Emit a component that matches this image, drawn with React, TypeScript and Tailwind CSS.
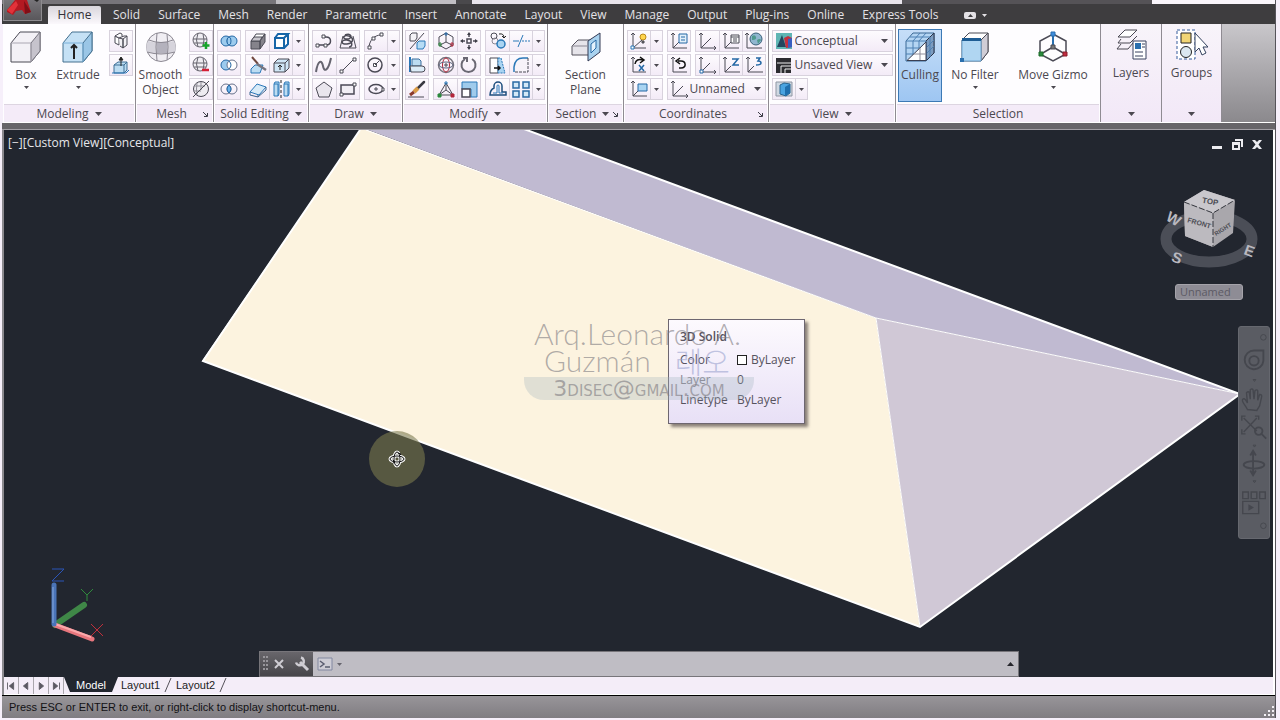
import type { ReactNode } from "react";
import clsx from "clsx";

const tabs = [
  "Solid",
  "Surface",
  "Mesh",
  "Render",
  "Parametric",
  "Insert",
  "Annotate",
  "Layout",
  "View",
  "Manage",
  "Output",
  "Plug-ins",
  "Online",
  "Express Tools",
];

// all small icons are drawn on a 24x22 grid, the button border takes the outer pixel
const icons: Record<string, ReactNode> = {
  polysolid: (
    <>
      <path d="M6 6l5-3 2 1v3M6 6v7l4 2V8z" fill="#fff" />
      <path d="M10 8l4 1v9l-3-2M14 9l4-3v9l-4 3zM6 6l4 2 5-2 3 0" fill="#f2f0f5" />
    </>
  ),
  presspull: (
    <>
      <path d="M5 11l4-3h9v8l-3 3H5z" fill="#bcdcf2" stroke="#3f6f96" />
      <path d="M5 11h10v8M15 11l3-3" stroke="#3f6f96" />
      <path d="M3 19h14l3-3" stroke="#2a78b8" />
      <path d="M12 12V4M10 6l2-3 2 3z" stroke="#222" fill="#222" />
    </>
  ),
  meshMore: (
    <>
      <circle cx="11" cy="10" r="7" fill="#efedf2" stroke="#66646e" />
      <path d="M4 9h14M5 13h12M9 3q-3 7 0 14M14 4q2 6 0 12" stroke="#66646e" />
      <path d="M17 12v7M13.500 15.500h7" stroke="#18a32a" strokeWidth="2.500" />
    </>
  ),
  meshLess: (
    <>
      <circle cx="11" cy="10" r="7" fill="#efedf2" stroke="#66646e" />
      <path d="M4 9h14M5 13h12M9 3q-3 7 0 14M14 4q2 6 0 12" stroke="#66646e" />
      <path d="M13 16h7" stroke="#d41f35" strokeWidth="2.500" />
    </>
  ),
  meshOff: (
    <>
      <circle cx="12" cy="11" r="7.500" fill="#eeecf1" />
      <path d="M8 5q-1 6 0 12M5 8h11M5 13h7M12 4v8" stroke="#8f8d96" />
      <path d="M4 19L20 3" />
    </>
  ),
  union: (
    <g stroke="#2468a5" fill="#9ccbee">
      <circle cx="9" cy="11" r="5" />
      <circle cx="15" cy="11" r="5" />
      <ellipse cx="12" cy="11" rx="2" ry="4" />
    </g>
  ),
  subtract: (
    <>
      <circle cx="9" cy="11" r="5" fill="#9ccbee" stroke="#2468a5" />
      <circle cx="15" cy="11" r="5" fill="#fff" stroke="#67718a" />
      <path d="M12 7q4 4 0 8" stroke="#2468a5" />
    </>
  ),
  intersect: (
    <>
      <circle cx="9" cy="11" r="5" stroke="#67718a" />
      <circle cx="15" cy="11" r="5" stroke="#67718a" />
      <path d="M12 7q4 4 0 8q-4-4 0-8z" fill="#69b2ea" stroke="#2468a5" />
    </>
  ),
  thicken: (
    <>
      <path d="M10 4h9l-5 6H6z" fill="#fff" />
      <path d="M5 11h9v8H5zM14 11l5-7v8l-5 7z" fill="#85838b" />
      <path d="M8 7h8l-2 4H5z" fill="#c9c7ce" />
    </>
  ),
  slice: (
    <>
      <path d="M5 15l4-4h8l-3 8H5z" fill="#bcdcf2" stroke="#2a78b8" />
      <path d="M6 3l6 7" stroke="#70483f" strokeWidth="2" />
      <path d="M11 10l9 6" strokeWidth="2.500" stroke="#77757f" />
    </>
  ),
  slab: (
    <>
      <path d="M4 14l7-8 9 3-7 8z" fill="#d8ebf8" stroke="#2a78b8" />
      <path d="M4 14v3l8 2 8-7V9M12 17v2" stroke="#39648c" />
    </>
  ),
  frameBox: (
    <g stroke="#1665a8" strokeWidth="2">
      <path d="M6 8h9v10H6zM6 8l3-4h10l-4 4M19 4v10l-4 4" fill="#fff" />
    </g>
  ),
  shellBox: (
    <>
      <path d="M5 9l4-4h11v9l-4 4H5z" fill="#cfe6f6" />
      <path d="M5 9h11v9M16 9l4-4" />
      <path d="M11 16v-4M9 13l2-2 2 2" stroke="#222" />
    </>
  ),
  separate: (
    <>
      <path d="M5 6h4v12H5zM5 6l1-2h4v12l-1 2" fill="#bcdcf2" stroke="#2a78b8" />
      <path d="M15 6h4v12h-4zM15 6l1-2h4v12l-1 2" fill="#bcdcf2" stroke="#2a78b8" />
      <path d="M12 2v18" stroke="#222" strokeDasharray="3 2" />
    </>
  ),
  polyline: (
    <>
      <path d="M6 15h8c6 0 6-8 0-8h-2" strokeWidth="1.500" />
      <path d="M4 14h3v3H4zM12 14h3v3h-3zM10 5h3v3h-3z" fill="#fff" />
    </>
  ),
  helix: (
    <>
      <path d="M7 6L4 18h16L17 6" />
      <path d="M9 5c7-3 8 4 2 4s-3-5 2-3 5 7-2 8-6-5 0-4 6 7 2 7" strokeWidth="1.500" />
    </>
  ),
  arc: (
    <>
      <path d="M5 18c0-7 5-13 12-13" />
      <path d="M4 16h3v3H4zM8 7h3v3H8zM16 3h3v3h-3z" fill="#fff" />
    </>
  ),
  spline: <path d="M4 18c2-13 6-12 7-6s5 6 8-8" strokeWidth="2" stroke="#666570" />,
  line: (
    <>
      <path d="M5 18L18 5" />
      <path d="M4 16h3v3H4zM17 4h3v3h-3z" fill="#fff" />
    </>
  ),
  circle: (
    <>
      <circle cx="11" cy="11" r="7" strokeWidth="1.500" />
      <path d="M11 11l4-4M9.500 9.500h3v3h-3z" fill="#fff" />
    </>
  ),
  polygon: <path d="M12 4l8 6-3 9H7l-3-9z" fill="#e9e6ed" />,
  rectangle: (
    <>
      <path d="M5 7h13v9H5z" fill="#f1eef4" strokeWidth="1.500" />
      <path d="M4 15h3v3H4zM17 5h3v3h-3z" fill="#fff" />
    </>
  ),
  ellipse: (
    <>
      <ellipse cx="12" cy="11" rx="7" ry="4.500" strokeWidth="1.500" />
      <path d="M10 11h4M12 9v4M18 10h2v3h-2z" fill="#fff" />
    </>
  ),
  move2: (
    <>
      <path d="M5 5l2-2h5v5l-2 3H5z" fill="#f4f2f6" />
      <path d="M5 19L19 3" />
      <path d="M12 13l2-2h6v5l-2 3h-6z" fill="#b7dcf5" stroke="#2a78b8" />
    </>
  ),
  gizmoMove: (
    <>
      <path d="M12 3l7 4v8l-7 4-7-4V7zM12 3v9l-6 3M12 12l6 3" />
      <path d="M5 13h2v3H5z" stroke="#2b8a3c" />
      <path d="M17 13h2v3h-2z" stroke="#b3273a" />
      <path d="M11 3h2v2h-2z" stroke="#2a6fae" />
    </>
  ),
  move: (
    <>
      <path d="M10 9h4v4h-4zM12 5v2M12 15v2M6 11h2M16 11h2" strokeWidth="1.500" />
      <path d="M10 5l2-3 2 3zM10 17l2 3 2-3zM6 9l-3 2 3 2zM18 9l3 2-3 2z" fill="#3c3c46" stroke="none" />
    </>
  ),
  copy: (
    <>
      <circle cx="8" cy="6" r="3" />
      <circle cx="9" cy="11" r="3" stroke="#8b8993" />
      <circle cx="15" cy="14" r="4" fill="#a9d4f2" stroke="#2a78b8" strokeWidth="1.500" />
      <path d="M13 4q5-1 5 4M16 6l2 2 2-2" stroke="#222" />
    </>
  ),
  trim: (
    <>
      <path d="M4 11h6M9 17L14 5" stroke="#2a78b8" />
      <path d="M13 11h8" stroke="#2a78b8" strokeDasharray="2 1" />
    </>
  ),
  align: (
    <>
      <path d="M5 3v15" stroke="#2a78b8" strokeWidth="2" />
      <path d="M7 5h7l2 2v5H7z" fill="#bcdcf2" stroke="#3a6f9e" />
      <path d="M5 12h12q3 0 3 3t-3 3H6z" fill="#dcecf8" />
    </>
  ),
  gizmoRotate: (
    <g>
      <circle cx="12" cy="11" r="7.500" stroke="#77757f" strokeWidth="1.500" />
      <ellipse cx="12" cy="11" rx="3.500" ry="7" stroke="#b3273a" />
      <ellipse cx="12" cy="11" rx="7" ry="3" stroke="#59617a" />
      <path d="M11 10h2v2h-2z" />
    </g>
  ),
  rotate: (
    <path d="M15 5a7 7 0 1 1-7 0M6 4h4v4" strokeWidth="2" stroke="#6a6873" />
  ),
  stretch: (
    <>
      <path d="M4 4h8v15H4z" fill="#fff" />
      <path d="M12 4h3l4 15h-7z" fill="#a9d4f2" stroke="#2a78b8" strokeDasharray="2 1" />
      <path d="M8 14h6M12 12l2 2-2 2" stroke="#111" strokeWidth="1.500" />
    </>
  ),
  fillet: (
    <>
      <path d="M5 18V11q1-7 8-7h6v14z" fill="#f7f3f9" stroke="none" />
      <path d="M5 18v-5q1-9 9-9h5" stroke="#2a78b8" strokeWidth="1.500" />
      <path d="M19 4v14H5" strokeDasharray="3 1" />
    </>
  ),
  erase: (
    <>
      <path d="M19 4l-6 6" stroke="#3a3a42" strokeWidth="2.500" strokeLinecap="round" />
      <path d="M13 10l-4 4" stroke="#d99b46" strokeWidth="4" />
      <path d="M9 14l-4 3" stroke="#8b3a2a" strokeWidth="3" />
      <path d="M3 19h16" />
    </>
  ),
  gizmoScale: (
    <>
      <path d="M12 5L5 17h14zM12 5v7L5 17M12 12l7 5" />
      <path d="M11 4h2v2h-2z" stroke="#2a78b8" />
      <path d="M4 16h3v3H4z" fill="#2b8a3c" stroke="#2b8a3c" />
      <path d="M17 16h3v3h-3z" fill="#b3273a" stroke="#b3273a" />
    </>
  ),
  scale: (
    <>
      <path d="M5 4h15v15h-6V11H5z" fill="#9fcbec" stroke="#2a78b8" />
      <path d="M5 11h8v8H5z" fill="#fff" strokeWidth="1.500" />
    </>
  ),
  offset: (
    <g>
      <path d="M4 17h16v-3h-4V8a4 4 0 0 0-8 0v2q-4 2-4 7z" stroke="#1d4e7d" strokeWidth="1.500" />
      <path d="M7 15h4V8a1 1 0 0 1 2 0v7h4" stroke="#2a78b8" />
    </g>
  ),
  array: (
    <g stroke="#2a6aa4" fill="#d3e8f7" strokeWidth="1.500">
      <path d="M4 4h6v6H4zM14 4h6v6h-6zM4 13h6v6H4zM14 13h6v6h-6z" />
    </g>
  ),
  ucs: <path d="M6 3v15h15M4 5l2-2 2 2M19 16l2 2-2 2M6 18l10-10" />,
  ucsBulb: (
    <>
      <path d="M6 3v15h13M4 5l2-2 2 2M6 18l9-8" />
      <circle cx="16" cy="7" r="3" fill="#ffd54d" stroke="#b98a1c" />
      <path d="M15 11h2v2h-2z" fill="#777" />
      <path d="M4 16h3v3H4z" fill="#fff" stroke="#2a78b8" />
    </>
  ),
  ucsX: (
    <>
      <path d="M6 3v15h13M4 5l2-2 2 2" />
      <path d="M8 10q1-6 8-4M13 3l4 3-4 3" stroke="#111" strokeWidth="1.500" />
      <path d="M12 11l5 6M17 11l-5 6" stroke="#2468a5" strokeWidth="1.500" />
    </>
  ),
  ucsView: (
    <>
      <path d="M6 3v15h14M4 5l2-2 2 2M6 18l6-6" />
      <path d="M11 6h9v7h-9z" fill="#a9d4f2" stroke="#2468a5" />
    </>
  ),
  ucsFile: (
    <>
      <path d="M6 3v15h14M4 5l2-2 2 2M6 18l7-7" />
      <path d="M12 4h8v9h-8z" fill="#e3f0fa" stroke="#2468a5" />
      <path d="M14 7h4M14 10h4" stroke="#2468a5" />
    </>
  ),
  ucsList: (
    <>
      <path d="M6 3v15h14M4 5l2-2 2 2M6 18l7-7" />
      <path d="M12 5h8v8h-8zM12 7h8M14 9h4M14 11h4" fill="#fff" />
    </>
  ),
  ucsWorld: (
    <>
      <path d="M5 3v15h15M3 5l2-2 2 2" />
      <circle cx="14" cy="9" r="6" fill="#8fb6cf" stroke="#3a6179" />
      <path d="M10 6q3-2 4 1t-4 3zM15 10q3-2 4 0l-3 4z" fill="#4e9a8d" stroke="none" />
    </>
  ),
  ucsPrev: (
    <>
      <path d="M6 3v15h14M4 5l2-2 2 2" />
      <path d="M12 14h2c6 0 5-7 0-7h-3M13 4l-4 3 4 3" stroke="#111" strokeWidth="1.500" />
    </>
  ),
  ucsOrigin: (
    <>
      <path d="M6 3v15h15M4 5l2-2 2 2M6 18l9-9M19 16l2 2-2 2" />
      <path d="M5 16h3v3H5z" fill="#fff" stroke="#2468a5" />
    </>
  ),
  ucsZ: (
    <>
      <path d="M6 3v15h15M4 5l2-2 2 2M6 18l6-6" />
      <path d="M13 5h6l-5 6h6" stroke="#2468a5" strokeWidth="1.500" />
    </>
  ),
  ucs3: (
    <>
      <path d="M6 3v15h15M4 5l2-2 2 2M6 18l6-6" />
      <path d="M14 4h4l-2 3q3 0 3 2t-5 2" stroke="#2468a5" strokeWidth="1.500" />
    </>
  ),
  conceptual: (
    <>
      <path d="M4 3h16v16H4z" fill="#5fb5b4" stroke="none" />
      <path d="M5 17L10 5l4 12z" fill="#23465f" stroke="none" />
      <path d="M12 8l4-2 4 2v9l-6 1z" fill="#c42f3e" stroke="none" />
      <path d="M16 9l4-1v9l-4 1z" fill="#375ec0" stroke="none" />
    </>
  ),
  unsavedView: (
    <>
      <path d="M4 4h15v15H4z" fill="#2b2b30" stroke="none" />
      <path d="M5 9h14M9 19v-7h10M13 19v-4h6" stroke="#eee" />
    </>
  ),
  viewport: (
    <>
      <path d="M4 4h16v14H4z" fill="#cfd8e2" stroke="#9097a3" />
      <path d="M8 7l4-2 6 1v9l-4 3-6-2z" fill="#4aa3e0" stroke="#28648f" />
      <path d="M13 9l5-3v9l-5 3z" fill="#1f6fae" stroke="none" />
    </>
  ),
};

function Icon({ name }: { name: string }) {
  return (
    <svg
      viewBox="1 1 22 20"
      className="h-5 w-[22px] shrink-0"
      fill="none"
      stroke="#4b4a55"
      aria-hidden="true"
    >
      {icons[name]}
    </svg>
  );
}

function Caret({ small, up }: { small?: boolean; up?: boolean }) {
  return (
    <svg
      viewBox="0 0 8 4"
      className={clsx("shrink-0", small ? "h-[3px] w-[5px]" : "h-1 w-[7px]", up && "rotate-180")}
      preserveAspectRatio="none"
      aria-hidden="true"
    >
      <path d="M0 0h8L4 4z" fill="currentColor" />
    </svg>
  );
}

function Tools({ names, menu }: { names: string[]; menu?: boolean }) {
  return (
    <div className="flex h-[22px] border border-[#d8d2dd] bg-gradient-to-b from-[#fdfbfe] to-[#f3ebf7]">
      {names.map((name, i) => (
        <button
          key={name}
          type="button"
          aria-label={name}
          className={clsx(
            "flex h-5 items-center justify-center",
            names.length > 1 ? "w-[23px]" : "w-[22px]",
            i > 0 && "border-l border-[#d8d2dd]"
          )}
        >
          <Icon name={name} />
        </button>
      ))}
      {menu && (
        <button
          type="button"
          aria-label={`${names[0]} menu`}
          className="flex h-5 w-3 items-center justify-center border-l border-[#d8d2dd]"
        >
          <Caret small />
        </button>
      )}
    </div>
  );
}

function Column({ rows, menu }: { rows: string[][]; menu?: boolean }) {
  return (
    <div className="flex flex-col gap-[2px]">
      {rows.map((names) => (
        <Tools key={names[0]} names={names} menu={menu} />
      ))}
    </div>
  );
}

function BigButton({
  label,
  className,
  menu,
  children,
}: {
  label: string;
  className?: string;
  menu?: boolean;
  children: ReactNode;
}) {
  return (
    <button
      type="button"
      className={clsx("flex h-[72px] flex-col items-center leading-[15px]", className)}
    >
      <svg
        viewBox="0 0 32 32"
        className="mt-px mb-1 size-8 shrink-0"
        fill="none"
        stroke="#4b4a55"
        aria-hidden="true"
      >
        {children}
      </svg>
      <span>{label}</span>
      {menu && (
        <span className="mt-1">
          <Caret small />
        </span>
      )}
    </button>
  );
}

function Panel({
  title,
  className,
  menu,
  launcher,
  children,
}: {
  title: string;
  className: string;
  menu?: boolean;
  launcher?: boolean;
  children: ReactNode;
}) {
  return (
    <section
      className={clsx("flex shrink-0 flex-col border-r border-[#8f8b92] bg-[#fefdff]", className)}
    >
      <div className="flex h-20 justify-center gap-1 pt-[6px]">{children}</div>
      <div className="mx-px flex h-[18px] items-center border-t border-[#ddd5e1] bg-[#f4ebf8] px-1">
        <h2 className="flex flex-1 items-center justify-center gap-[6px]">
          {title}
          {menu && <Caret />}
        </h2>
        {launcher && (
          <button type="button" aria-label={`${title} settings`}>
            <svg viewBox="0 0 6 6" className="size-[6px]" fill="none" stroke="#3c3c46">
              <path d="M1 1l4 4M5.500 2v3.500H2" />
            </svg>
          </button>
        )}
      </div>
    </section>
  );
}

function Picker({ icon, label, value, className }: { icon: string; label: string; value: string; className: string }) {
  return (
    <label
      className={clsx(
        "flex h-[22px] items-center border border-[#d8d2dd] bg-gradient-to-b from-[#fdfbfe] to-[#f3ebf7] pr-1",
        className
      )}
    >
      <Icon name={icon} />
      <select aria-label={label} className="min-w-0 flex-1 appearance-none bg-transparent leading-[18px] outline-none">
        <option>{value}</option>
      </select>
      <Caret />
    </label>
  );
}

function Ribbon() {
  return (
    <div className="flex h-[99px] overflow-hidden border-b border-white bg-gradient-to-b from-[#c9c7cb] to-[#8b898d] text-xs text-[#4b4850]">
      <Panel title="Modeling" className="w-[133px]" menu>
        <div className="flex flex-1 gap-1">
          <BigButton label="Box" className="w-[46px]" menu>
            <path d="M1 12L10 1h20v19l-9 11H1z" fill="#f3f1f6" />
            <path d="M21 12l9-11v19l-9 11z" fill="#c6c3cc" stroke="#77757f" />
            <path d="M1 12h20v19" stroke="#aaa7b2" />
          </BigButton>
          <BigButton label="Extrude" className="w-[50px]" menu>
            <path d="M1 12L10 1h20v19l-9 11H1z" fill="#c5e1f5" stroke="#44708f" />
            <path d="M21 12l9-11v19l-9 11z" fill="#9ac6e6" stroke="#44708f" />
            <path d="M1 12h20v19" stroke="#7ab0d8" />
            <path d="M12 28V14M9 17l3-3 3 3" stroke="#222" strokeWidth="2" />
          </BigButton>
        </div>
        <div className="pr-[2px]">
          <Column rows={[["polysolid"], ["presspull"]]} />
        </div>
      </Panel>

      <Panel title="Mesh" className="w-[78px]" launcher>
        <BigButton label="Smooth Object" className="w-12">
          <circle cx="16" cy="16" r="14.500" fill="#f0eef3" stroke="#8b8892" />
          <path d="M3 10q13 4 26 0q3 6 1 11q-14 4-28 0q-2-6 1-11z" fill="#d6d4dc" stroke="none" />
          <path d="M12 11h10v11H12z" fill="#b4b2bd" stroke="none" />
          <path d="M4 9q12 5 24 0M2 21q14 4 28 0M12 2q-2 14 0 28M22 3q2 13 0 26" stroke="#8b8892" />
        </BigButton>
        <Column rows={[["meshMore"], ["meshLess"], ["meshOff"]]} />
      </Panel>

      <Panel title="Solid Editing" className="w-[95px]" menu>
        <Column rows={[["union"], ["subtract"], ["intersect"]]} />
        <Column
          menu
          rows={[
            ["thicken", "frameBox"],
            ["slice", "shellBox"],
            ["slab", "separate"],
          ]}
        />
      </Panel>

      <Panel title="Draw" className="w-[94px]" menu>
        <Column
          rows={[
            ["polyline", "helix"],
            ["spline", "line"],
            ["polygon", "rectangle"],
          ]}
        />
        <Column menu rows={[["arc"], ["circle"], ["ellipse"]]} />
      </Panel>

      <Panel title="Modify" className="w-[145px]" menu>
        <Column rows={[["move2"], ["align"], ["erase"]]} />
        <Column
          rows={[
            ["gizmoMove", "move"],
            ["gizmoRotate", "rotate"],
            ["gizmoScale", "scale"],
          ]}
        />
        <Column
          menu
          rows={[
            ["copy", "trim"],
            ["stretch", "fillet"],
            ["offset", "array"],
          ]}
        />
      </Panel>

      <Panel title="Section" className="w-[76px]" menu launcher>
        <BigButton label="Section Plane" className="w-12">
          <path d="M2 15l6-6h15v9l-4 6H2z" fill="#e6e4ea" stroke="#55525d" />
          <path d="M2 15h15" stroke="#8a8792" />
          <path d="M18 10L30 2v19L18 30z" fill="#a9d2ef" stroke="#333a55" />
          <path d="M21 13l5-4v8l-5 5z" fill="#e4f2fc" stroke="#2468a5" />
        </BigButton>
      </Panel>

      <Panel title="Coordinates" className="w-[145px]" launcher>
        <div className="flex flex-col gap-[2px]">
          <div className="flex gap-1">
            <Column menu rows={[["ucsBulb"], ["ucsX"]]} />
            <Column rows={[["ucsFile"], ["ucsPrev"]]} />
            <Column
              rows={[
                ["ucs", "ucsList", "ucsWorld"],
                ["ucsOrigin", "ucsZ", "ucs3"],
              ]}
            />
          </div>
          <div className="flex gap-1">
            <Tools names={["ucsView"]} menu />
            <Picker icon="ucs" label="Named UCS" value="Unnamed" className="flex-1" />
          </div>
        </div>
      </Panel>

      <Panel title="View" className="w-[127px]" menu>
        <div className="flex flex-col items-start gap-[2px]">
          <Picker icon="conceptual" label="Visual style" value="Conceptual" className="w-[121px]" />
          <Picker icon="unsavedView" label="Saved view" value="Unsaved View" className="w-[121px]" />
          <Tools names={["viewport"]} menu />
        </div>
      </Panel>

      <Panel title="Selection" className="w-[205px]">
        <div className="flex flex-1 pl-[2px]">
          <div className="-mt-px h-[73px] w-11 border border-[#3c79b5] bg-gradient-to-b from-[#c6def8] to-[#9ec6f2]">
            <BigButton label="Culling" className="w-[42px]">
              <path d="M2 10L9 2h21v20l-8 8H2z" fill="#b4d5f3" stroke="#3a6894" />
              <path d="M22 10l8-8v20l-8 8z" fill="#7c9cc0" stroke="#2a3348" />
              <path
                d="M2 10h20v20M2 17h20M2 23h20M9 10v20M15 10v20M6 6h20v20M9 10l7-8M15 10l7-8M22 17l8-8M22 23l8-8"
                stroke="#4d80b3"
              />
              <path d="M3 29.500L22 11v18.500z" fill="#fff" stroke="#3a3f52" />
              <path d="M16 17v12M10 23h12" stroke="#8f8d99" />
            </BigButton>
          </div>
          <BigButton label="No Filter" className="w-[66px]" menu>
            <path d="M3 9l7-7h19v19l-7 9H3z" fill="#fff" />
            <path d="M22 9l7-7v19l-7 9z" fill="#d0cdd6" />
            <path d="M3 9h19v21H3z" fill="#b0d6f2" stroke="#6aa5d3" />
            <path d="M3 7h19v3H3z" fill="#1f5d94" stroke="none" />
            <path d="M1 27h4v4H1z" fill="#2a6fae" stroke="none" />
          </BigButton>
          <BigButton label="Move Gizmo" className="w-[90px]" menu>
            <path d="M16 3l13 7v13l-13 7-13-7V10zM16 16L4 23M16 16l12 7" strokeWidth="1.500" />
            <path d="M16 3v13" stroke="#2a6fae" strokeWidth="2" />
            <path d="M14 1h4v4h-4z" fill="#3f8ddc" stroke="#2a6fae" />
            <path d="M14 14h4v4h-4z" fill="#777" />
            <path d="M2 21h4v4H2z" fill="#2b8a3c" stroke="#1d6a2a" />
            <path d="M26 21h4v4h-4z" fill="#c22d40" stroke="#8a1e2c" />
          </BigButton>
        </div>
      </Panel>

      <SlimPanel label="Layers" className="w-[61px]">
        <path d="M3 9l7-7h12l-7 7z" fill="#fff" />
        <path d="M6 11l-3 4h12l7-7M6 16l-4 5h11l5-6" />
        <path d="M18 13h13v18H18z" fill="#fff" stroke="#39415f" />
        <path d="M20 15h6v6h-6z" fill="#2a6fae" stroke="none" />
        <path d="M27 16h3M27 19h3M20 24h8M20 28h8" stroke="#39415f" />
      </SlimPanel>
      <SlimPanel label="Groups" className="w-[60px]">
        <path d="M1 2h18v29H1z" fill="#fff" stroke="#345d9c" strokeDasharray="3 2" />
        <path d="M5 5h10v10H5z" fill="#f2d675" stroke="#222" />
        <circle cx="10" cy="24" r="5.500" fill="#dce8f0" stroke="#222" />
        <path d="M19 5v19l4-4 3 7 4-2-3-6h5z" fill="#fff" stroke="#33415e" />
      </SlimPanel>
    </div>
  );
}

function SlimPanel({ label, className, children }: { label: string; className: string; children: ReactNode }) {
  return (
    <section
      className={clsx(
        "flex shrink-0 flex-col items-center border-r border-[#8f8b92] bg-gradient-to-b from-[#f8f4fa] to-[#f2e8f7] pt-1",
        className
      )}
    >
      <button type="button" className="flex flex-1 flex-col items-center">
        <svg viewBox="0 0 32 32" className="size-8" fill="none" stroke="#4a4853" aria-hidden="true">
          {children}
        </svg>
        <span className="mt-px leading-6">{label}</span>
        <span className="mt-auto mb-[6px]">
          <Caret />
        </span>
      </button>
    </section>
  );
}

function Solid() {
  return (
    <svg
      viewBox="4 130 1269 547"
      preserveAspectRatio="xMinYMin slice"
      className="absolute inset-0 h-full w-full"
      aria-label="3D solid"
    >
      <path d="M360 130L202 361L920 627L876 318L368 130z" fill="#fcf3df" />
      <path d="M360 127L527 130L1240 394L876 318z" fill="#c0bad1" />
      <path d="M876 318L1240 394L920 627z" fill="#d0c8d6" />
      <path d="M366 130L876 318L1240 394M876 318L920 627" fill="none" stroke="#fff" />
      <path d="M360 130L203 361L920 627L1240 394L524 129" fill="none" stroke="#fff" strokeWidth="2" />
    </svg>
  );
}

function ViewCube() {
  return (
    <svg
      viewBox="0 0 104 90"
      className="h-[90px] w-[104px]"
      aria-label="View cube"
      fontFamily="Liberation Sans, Arial, sans-serif"
    >
      <ellipse cx="52" cy="57" rx="43" ry="23" fill="none" stroke="#4b4e57" strokeWidth="11" />
      <g fill="#b9b8bf" fontSize="15" fontWeight="bold">
        <text x="10" y="42" transform="rotate(30 17 36)">
          W
        </text>
        <text x="15" y="81" transform="rotate(20 20 76)">
          S
        </text>
        <text x="87" y="74" transform="rotate(20 92 70)">
          E
        </text>
      </g>
      <path d="M27 20L47 8l31 10-2 33-20 14-28-11z" fill="#a9a7ac" />
      <path d="M27 20L47 8l31 10-22 13z" fill="#c9c7cc" />
      <path d="M27 20l29 11v34L28 54z" fill="#bcbabf" />
      <path d="M27 20l29 11 22-13M56 31v34" fill="none" stroke="#34363d" strokeDasharray="6 2" />
      <g fill="#4c4d54" fontWeight="bold">
        <text x="45" y="22" fontSize="8" transform="rotate(10 52 20)">
          TOP
        </text>
        <text x="30" y="40" fontSize="7" transform="rotate(16 30 40)">
          FRONT
        </text>
        <text x="59" y="54" fontSize="6" transform="rotate(-32 59 54)">
          RIGHT
        </text>
      </g>
    </svg>
  );
}

function NavBar() {
  return (
    <div className="absolute top-[196px] right-[3px] h-[213px] w-8 rounded-[3px] border border-[#66686f] bg-[#5a5c63]">
      <svg viewBox="0 0 32 213" className="h-full w-full" fill="none" stroke="#45474e" strokeWidth="2" aria-label="Navigation bar">
        <circle cx="26" cy="5" r="3" strokeWidth="1" />
        <path d="M26 19v11a10 10 0 1 1-10-11z" />
        <circle cx="16" cy="30" r="5" />
        <path
          d="M9 82c-3-6-7-9-5-11s4 2 5 4l-1-11q2-2 3 0l1 7V61q2-2 3 0l1 10 1-9q2-2 3 0v10l2-6q3 0 2 3l-2 9-3 5z"
          strokeWidth="1.500"
        />
        <path d="M5 91l14 14M5 106L19 91M3 94v-5h4M17 89h4v4M3 103v5h4" strokeWidth="1.500" />
        <circle cx="21" cy="105" r="4" />
        <path d="M24 108l5 5M15 127v24M12 131l3-5 3 5M12 147l3 5 3-5" />
        <ellipse cx="16" cy="141" rx="11" ry="4" />
        <path d="M4 170h6v7H4zM13 170h6v7h-6zM22 170h6v7h-6zM4 180h17v13H4z" strokeWidth="1.500" />
        <path d="M10 183v7l6-3.500z" fill="#45474e" stroke="none" />
        <path d="M15 50h3l-1.500 2zM15 120h3l-1.500 2zM15 158h3l-1.500 2z" strokeWidth="1" />
        <circle cx="26" cy="206" r="3" strokeWidth="1" />
      </svg>
    </div>
  );
}

function Tooltip() {
  return (
    <div className="absolute top-[189px] left-[664px] h-[105px] w-[137px] border border-[#6d6670] bg-gradient-to-b from-[#fdfafe] to-[#e8e0f6] px-[11px] pt-2 text-xs text-[#57535e] shadow-[3px_3px_3px_rgba(60,50,50,0.6)]">
      <p className="leading-[18px] font-semibold">3D Solid</p>
      <dl className="mt-1 grid grid-cols-[57px_1fr] leading-5">
        <dt>Color</dt>
        <dd className="flex items-center gap-1">
          <span className="size-[10px] border border-[#222] bg-white" />
          ByLayer
        </dd>
        <dt className="text-[#88838e]">Layer</dt>
        <dd>0</dd>
        <dt>Linetype</dt>
        <dd>ByLayer</dd>
      </dl>
    </div>
  );
}

function Watermark() {
  return (
    <div className="absolute top-[190px] left-[520px] w-[230px] font-[Lato,'Noto_Sans_CJK_KR',sans-serif] text-[30px] leading-[27px] font-light text-[#7d7a80]/60">
      <p className="pl-[10px] whitespace-nowrap">Arq.Leonardo A.</p>
      <p className="flex gap-6 pl-5">
        Guzmán
        <span className="font-['Noto_Sans_CJK_KR',sans-serif] text-[#9ba3cf]/60">레오</span>
      </p>
      <p className="mt-[3px] h-[23px] rounded-b-[20px] bg-[#9fb3bd]/30 text-center font-['DejaVu_Sans',sans-serif] text-[22px] leading-[23px] font-normal whitespace-nowrap [font-variant:small-caps]">
        3disec@gmail.com
      </p>
    </div>
  );
}

function Viewport() {
  return (
    <main className="relative min-h-0 flex-1 overflow-hidden bg-[#22262f]">
      <Solid />
      <p className="absolute top-1 left-1 text-xs leading-[18px] text-[#e6e6ea]">
        [−][Custom View][Conceptual]
      </p>

      <div className="absolute top-[6px] right-2 flex gap-1 text-[#ececf0]">
        {[
          "M3 10h10v3H3z",
          "M3 6h8v8H3zM5 9h4v3H5zM6 3h8v8h-2V5H6z",
          "M3 4h3l2 2 2-2h3L9.500 8.500 13 13h-3l-2-2-2 2H3l3.500-4.500z",
        ].map((d, i) => (
          <button key={d} type="button" aria-label={["Minimize", "Restore", "Close"][i]}>
            <svg viewBox="0 0 16 16" className="size-4" fill="currentColor" fillRule="evenodd">
              <path d={d} />
            </svg>
          </button>
        ))}
      </div>

      <div className="absolute top-[52px] right-[12px] flex flex-col items-center">
        <ViewCube />
        <button
          type="button"
          className="mt-3 flex h-4 w-[68px] items-center rounded-[3px] border border-[#a5a3aa] bg-[#8e8c95] px-1 text-[11px] text-[#5c5a64]"
        >
          Unnamed
        </button>
      </div>

      <NavBar />
      <Tooltip />
      <Watermark />

      {/* orbit cursor */}
      <div className="absolute top-[301px] left-[365px] flex size-14 items-center justify-center rounded-full bg-[#7c7a4f]/60">
        <svg viewBox="0 0 18 18" className="size-[18px]" fill="none">
          <g stroke="#fff" strokeWidth="3">
            <ellipse cx="9" cy="9" rx="7" ry="3" />
            <ellipse cx="9" cy="9" rx="3" ry="7" />
          </g>
          <g stroke="#111">
            <ellipse cx="9" cy="9" rx="7" ry="3" />
            <ellipse cx="9" cy="9" rx="3" ry="7" />
            <path d="M5 13l2-1-2-2M10 3l3 1-2 2" />
          </g>
        </svg>
      </div>

      {/* UCS axes */}
      <svg viewBox="0 0 60 84" className="absolute bottom-[30px] left-11 h-[84px] w-[60px]" fill="none" aria-label="UCS icon">
        <path d="M7 62L36 42" stroke="#3f8747" strokeWidth="6" strokeLinecap="round" />
        <path d="M7 62L44 76" stroke="#e8777e" strokeWidth="5" strokeLinecap="round" />
        <path d="M7 61L43 74" stroke="#fba9ab" strokeWidth="2" />
        <path d="M6 61V22" stroke="#4a74b8" strokeWidth="5" strokeLinecap="round" />
        <path d="M5 60V24" stroke="#86a8dd" />
        <path d="M4 6h12L4 18h12" stroke="#2b55b8" />
        <path d="M33 26l6 6 6-6M39 32v6" stroke="#2f8a3d" />
        <path d="M43 61l12 12M55 61L43 73" stroke="#c0303c" />
      </svg>

      <div className="absolute bottom-0 left-1/2 flex h-[26px] w-[760px] -translate-x-1/2 items-stretch border border-[#77757a] bg-[#bfbdc4]">
        <div className="flex w-[53px] items-center bg-gradient-to-b from-[#68666b] to-[#47464a] text-[#cfcdd3]">
          <svg viewBox="0 0 53 24" className="h-6 w-[53px]" fill="none" stroke="currentColor" aria-label="Command line tools">
            <path d="M4 4v16M7 4v16" strokeWidth="2" strokeDasharray="2 2" stroke="#98969b" />
            <path d="M15 8l8 8M23 8l-8 8" strokeWidth="2" />
            <path d="M40 10l8 8" strokeWidth="3" />
            <path d="M41 5.500a4 4 0 1 1-5 5" strokeWidth="2.500" />
          </svg>
        </div>
        <button type="button" aria-label="Recent commands" className="flex items-center gap-1 px-1 text-[#66646d]">
          <svg viewBox="0 0 16 14" className="h-[14px] w-4" fill="none" stroke="#8288a0">
            <path d="M1 1h14v12H1z" fill="#cdccd5" />
            <path d="M3 4l4 3-4 3M8 10h5" strokeWidth="1.500" stroke="#5a5d70" />
          </svg>
          <Caret small />
        </button>
        <input aria-label="Command" className="min-w-0 flex-1 bg-transparent text-xs outline-none" />
        <button type="button" aria-label="Command history" className="px-1 text-[#26262c]">
          <Caret up />
        </button>
      </div>
    </main>
  );
}

function LayoutTabs() {
  return (
    <nav className="flex h-[18px] items-stretch border-b border-white bg-[#f4edf8] font-['Liberation_Sans',Arial,sans-serif] text-[11px] text-[#222]">
      {["M4 4v8M11 4v8L6 8z", "M10 4v8L5 8z", "M6 4v8l5-4z", "M12 4v8M5 4v8l5-4z"].map((d, i) => (
        <button
          key={d}
          type="button"
          aria-label={["First", "Previous", "Next", "Last"][i]}
          className="flex w-[15px] items-center justify-center border-r border-[#aaa6ad]"
        >
          <svg viewBox="0 0 16 16" className="size-[14px]" fill="#5b5962" stroke="#5b5962">
            <path d={d} />
          </svg>
        </button>
      ))}
      <button
        type="button"
        className="h-[15px] w-[54px] bg-[#22262f] text-white [clip-path:polygon(0_0,100%_0,calc(100%-6px)_100%,6px_100%)]"
      >
        Model
      </button>
      {["Layout1", "Layout2"].map((name) => (
        <div key={name} className="flex">
          <button type="button" className="w-[45px] text-center">
            {name}
          </button>
          <svg viewBox="0 0 10 17" className="h-[17px] w-[10px]" stroke="#55525a" aria-hidden="true">
            <path d="M2 15L8 1" />
          </svg>
        </div>
      ))}
    </nav>
  );
}

export default function App() {
  return (
    <div className="flex h-screen flex-col overflow-hidden bg-[#f6effa] pr-[4px] pb-[2px] pl-[2px] font-['Open_Sans','Noto_Sans',sans-serif]">
      <div className="flex min-h-0 flex-1 flex-col border-r border-[#56545a]">
        <header className="relative shrink-0">
          <div className="flex h-1 bg-[#77757a]">
            <span className="w-[274px]" />
            <span className="w-[180px] bg-[#c0bec3]" />
            <span className="w-4 bg-[#4a494c]" />
            <span className="w-[430px] bg-[#e9e5ec]" />
            <span className="w-[250px] bg-[#555357]" />
            <span className="flex-1 bg-[#faf6fc]" />
          </div>
          <nav className="flex h-5 items-end gap-[2px] bg-[#3e3d3f] pl-[46px] text-xs leading-[18px] text-[#e4e2e6]">
            <button
              type="button"
              className="mr-[2px] w-[53px] rounded-t-[2px] bg-gradient-to-b from-[#d9d6dc] to-[#fbf8fc] text-center text-[#333138]"
            >
              Home
            </button>
            {tabs.map((tab) => (
              <button key={tab} type="button" className="px-2 whitespace-nowrap">
                {tab}
              </button>
            ))}
            <button type="button" aria-label="Minimize ribbon" className="ml-4 flex h-[18px] items-center gap-[6px]">
              <span className="flex h-[7px] w-3 items-center justify-center rounded-[2px] bg-[#e4e2e6] text-[#3e3d3f]">
                <Caret small up />
              </span>
              <Caret small />
            </button>
          </nav>
          <button
            type="button"
            aria-label="Application menu"
            className="absolute top-0 left-px h-[21px] w-[39px] border border-t-0 border-[#8d8b8f] bg-gradient-to-b from-[#77757a] to-[#59575b]"
          >
            <svg viewBox="0 0 38 20" className="h-5 w-[38px]">
              <path d="M3 10L11 0h12l4 12-6 2-3-4-6 1-3 4-6-3z" fill="#b31922" />
              <path d="M3 10l9-9 2 4-6 9z" fill="#e2323a" />
              <path d="M20 1l7 11-6 2z" fill="#7f0f17" />
              <path d="M30 0h5l-2 2z" fill="#222" />
            </svg>
          </button>
        </header>

        <div className="shrink-0 pl-px">
          <Ribbon />
        </div>
        <div className="h-[7px] shrink-0 border-b border-[#a29fa5] bg-[#676569]" />

        <div className="flex min-h-0 flex-1 flex-col border-r-2 border-l-2 border-r-white border-l-[#8c8a8f]">
          <Viewport />
          <LayoutTabs />
        </div>

        <footer className="flex h-[23px] shrink-0 items-center justify-between border-t border-black bg-gradient-to-b from-[#989599] to-[#807d82] pl-[7px] font-['Liberation_Sans',Arial,sans-serif] text-[11px] text-[#121114]">
          <p>Press ESC or ENTER to exit, or right-click to display shortcut-menu.</p>
          <svg viewBox="0 0 12 12" className="mt-2 size-3" fill="#f3f0f5" aria-hidden="true">
            <path d="M9 1h2v2H9zM5 5h2v2H5zM9 5h2v2H9zM1 9h2v2H1zM5 9h2v2H5zM9 9h2v2H9z" />
          </svg>
        </footer>
      </div>
    </div>
  );
}
